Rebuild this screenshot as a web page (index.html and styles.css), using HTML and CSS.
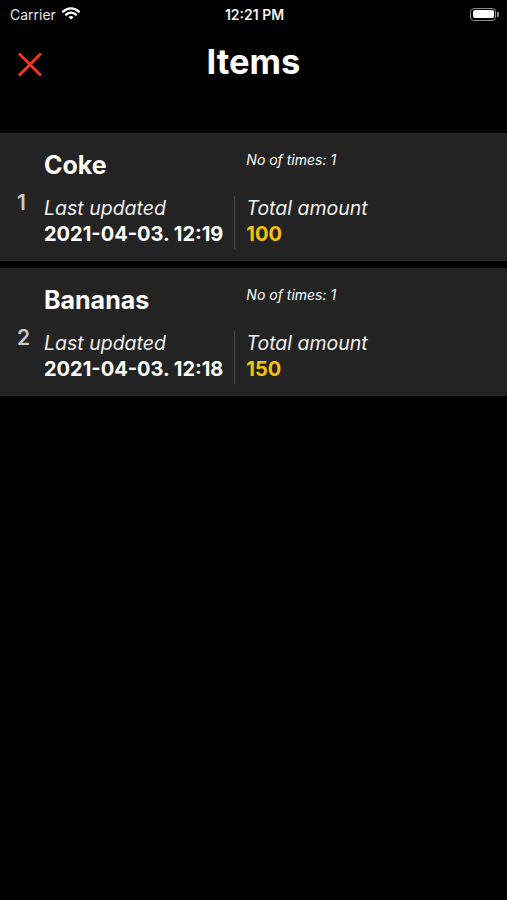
FILE: index.html
```html
<!DOCTYPE html>
<html lang="en">
  <head>
    <meta charset="UTF-8" />
    <meta name="viewport" content="width=device-width, initial-scale=1.0" />
    <title>Items</title>
    <link rel="stylesheet" href="styles.css">
  </head>
  <body>
    <div class="status-bar">
      <div class="carrier">
        Carrier
        <svg class="wifi" width="18" height="14" viewBox="0 0 18 14">
          <path d="M1.2 5.6 A11 11 0 0 1 16.8 5.6" fill="none" stroke="#fff" stroke-width="2.4" stroke-linecap="round" />
          <path d="M4.1 8.6 A7 7 0 0 1 13.9 8.6" fill="none" stroke="#fff" stroke-width="2.4" stroke-linecap="round" />
          <path d="M9 13.6 L6.6 11.2 A3.4 3.4 0 0 1 11.4 11.2 Z" fill="#fff" />
        </svg>
      </div>
      <div class="clock">12:21 PM</div>
      <div class="battery">
        <div class="battery-body"><div class="battery-fill"></div></div>
        <div class="battery-tip"></div>
      </div>
    </div>

    <div class="nav">
      <svg class="close" width="26" height="25" viewBox="0 0 26 25">
        <path d="M2 1.5 L24 23.5 M24 1.5 L2 23.5" stroke="#f2361f" stroke-width="3" />
      </svg>
      <h1>Items</h1>
      <div></div>
    </div>

    <div class="list">
      <div class="card">
        <div class="index">1</div>
        <div class="details">
          <div class="name">Coke</div>
          <div class="times">No of times: 1</div>
          <div class="cell">
            <div class="label">Last updated</div>
            <div class="value">2021-04-03. 12:19</div>
          </div>
          <div class="divider"></div>
          <div class="cell">
            <div class="label">Total amount</div>
            <div class="value amount">100</div>
          </div>
        </div>
      </div>

      <div class="card">
        <div class="index">2</div>
        <div class="details">
          <div class="name">Bananas</div>
          <div class="times">No of times: 1</div>
          <div class="cell">
            <div class="label">Last updated</div>
            <div class="value">2021-04-03. 12:18</div>
          </div>
          <div class="divider"></div>
          <div class="cell">
            <div class="label">Total amount</div>
            <div class="value amount">150</div>
          </div>
        </div>
      </div>
    </div>
  </body>
</html>
```

FILE: styles.css
```css
* {
  margin: 0;
  padding: 0;
  box-sizing: border-box;
}
body,
html {
  width: 100%;
  height: 100%;
  overflow: hidden;
  background: #000;
  color: #fff;
  font-family: "Inter", "Liberation Sans", sans-serif;
}
.status-bar {
  display: grid;
  grid-template-columns: 1fr auto 1fr;
  align-items: center;
  height: 28px;
  padding: 0 8px 0 10px;
  font-size: 14px;
}
.carrier {
  display: flex;
  align-items: center;
  gap: 6px;
  color: #e6e6e6;
}
.wifi {
  margin-top: -2px;
}
.clock {
  font-weight: 600;
  color: #f2f2f2;
}
.battery {
  display: flex;
  align-items: center;
  justify-self: end;
}
.battery-body {
  width: 26px;
  height: 13px;
  border: 1.5px solid #8a8a8a;
  border-radius: 4px;
  padding: 1.5px;
}
.battery-fill {
  width: 100%;
  height: 100%;
  background: #fff;
  border-radius: 2px;
}
.battery-tip {
  width: 2px;
  height: 5px;
  margin-left: 1px;
  background: #8a8a8a;
  border-radius: 0 1px 1px 0;
}
.nav {
  display: grid;
  grid-template-columns: 1fr auto 1fr;
  align-items: center;
  padding-top: 14px;
  height: 54px;
}
.close {
  margin: 5px 0 0 17px;
}
h1 {
  font-size: 34.5px;
  font-weight: 700;
  line-height: 40px;
}
.list {
  display: flex;
  flex-direction: column;
  gap: 7px;
  margin-top: 51px;
}
.card {
  display: flex;
  align-items: center;
  gap: 15px;
  background: #232323;
  border-bottom: 1px solid #2d2d2d;
  padding: 17px 0 13px 17px;
}
.index {
  width: 12px;
  margin-top: 8px;
  font-size: 21px;
  font-weight: 600;
  line-height: 26px;
  color: #c8c8c8;
}
.details {
  display: grid;
  grid-template-columns: auto 1px auto;
  column-gap: 11px;
  row-gap: 15px;
}
.name {
  font-size: 25px;
  font-weight: 700;
  line-height: 30px;
}
.times {
  grid-column: 3;
  font-size: 14px;
  font-style: italic;
  line-height: 18px;
  margin-top: 1px;
}
.label {
  font-size: 19.5px;
  font-style: italic;
  line-height: 26px;
  color: #f0f0f0;
}
.value {
  font-size: 20px;
  font-weight: 700;
  line-height: 26px;
}
.amount {
  color: #f4c20d;
}
.divider {
  background: #4a4a4a;
  margin: 1px 0 -2px;
}
```
